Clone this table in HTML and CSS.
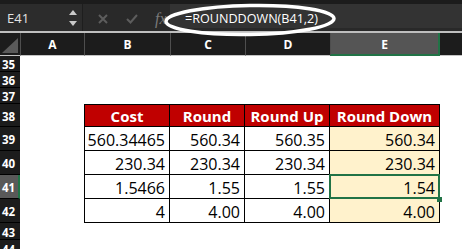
FILE: index.html
```html
<!DOCTYPE html>
<html lang="en">
<head>
<meta charset="utf-8">
<title>ROUNDDOWN</title>
<link rel="stylesheet" href="styles.css">
</head>
<body>
<div class="app">
  <div class="topstrip"></div>
  <div class="fbar">
    <div class="namebox">
      <span class="ref">E41</span>
      <svg class="stepper" width="8" height="17" viewBox="0 0 8 17">
        <path d="M4 0 L8 5 L0 5 Z" fill="#c9c9c9"/>
        <path d="M0 11 L8 11 L4 16 Z" fill="#c9c9c9"/>
      </svg>
    </div>
    <div class="tools">
      <svg class="ico-x" width="10" height="10" viewBox="0 0 10 10">
        <path d="M1 1 L9 9 M9 1 L1 9" stroke="#5d5d5d" stroke-width="2" fill="none"/>
      </svg>
      <svg class="ico-ok" width="12" height="10" viewBox="0 0 12 10">
        <path d="M1 5 L4.5 8.5 L11 1" stroke="#5d5d5d" stroke-width="2" fill="none"/>
      </svg>
      <span class="fx">fx</span>
    </div>
    <div class="formula">=ROUNDDOWN(B41,2)</div>
    <svg class="ring" width="184" height="38" viewBox="0 0 184 38">
      <ellipse cx="91" cy="20" rx="84" ry="14.5" fill="none" stroke="#fff" stroke-width="3.5" transform="rotate(-1 91 20)"/>
    </svg>
  </div>
  <div class="rule"></div>
  <div class="sheet">
    <div class="corner"><svg width="16" height="15" viewBox="0 0 16 15"><path d="M16 0 L16 15 L0 15 Z" fill="#5a5a5a"/></svg></div>
    <div class="ch">A</div>
    <div class="ch">B</div>
    <div class="ch">C</div>
    <div class="ch">D</div>
    <div class="ch ch-sel">E</div>
    <div class="ch ch-end"></div>

    <div class="rh">35</div><div class="blank"></div>
    <div class="rh">36</div><div class="blank"></div>
    <div class="rh">37</div><div class="blank"></div>

    <div class="rh">38</div>
    <div class="cell"></div>
    <div class="th first">Cost</div>
    <div class="th">Round</div>
    <div class="th">Round Up</div>
    <div class="th">Round Down</div>
    <div class="cell"></div>

    <div class="rh">39</div>
    <div class="cell"></div>
    <div class="td first">560.34465</div>
    <div class="td">560.34</div>
    <div class="td">560.35</div>
    <div class="td hl">560.34</div>
    <div class="cell"></div>

    <div class="rh">40</div>
    <div class="cell"></div>
    <div class="td first">230.34</div>
    <div class="td">230.34</div>
    <div class="td">230.34</div>
    <div class="td hl">230.34</div>
    <div class="cell"></div>

    <div class="rh rh-sel">41</div>
    <div class="cell"></div>
    <div class="td first">1.5466</div>
    <div class="td">1.55</div>
    <div class="td">1.55</div>
    <div class="td hl sel">1.54<span class="handle"></span></div>
    <div class="cell"></div>

    <div class="rh">42</div>
    <div class="cell"></div>
    <div class="td first">4</div>
    <div class="td">4.00</div>
    <div class="td">4.00</div>
    <div class="td hl">4.00</div>
    <div class="cell"></div>

    <div class="rh">43</div><div class="blank"></div>
    <div class="rh">44</div><div class="blank"></div>
  </div>
</div>
</body>
</html>
```

FILE: styles.css
```css
* { box-sizing: border-box; margin: 0; padding: 0; }
html, body { width: 462px; height: 249px; overflow: hidden; background: #fff; }
body { font-family: "Open Sans", "Liberation Sans", sans-serif; }

.app { width: 462px; }

.topstrip { height: 4px; background: #1c1c1c; }

.fbar {
  position: relative;
  height: 27px;
  display: flex;
  background: #292929;
}
.namebox {
  width: 83px;
  display: flex;
  align-items: center;
  justify-content: space-between;
  padding: 1px 5px 0 7px;
  background: #2c2c2c;
  border-right: 1px solid #1e1e1e;
}
.ref { color: #e2e2e2; font-size: 13px; }
.stepper { display: block; margin-top: 1px; }

.tools {
  width: 87px;
  display: flex;
  align-items: center;
  padding: 3px 0 0 15px;
}
.ico-x { display: block; }
.ico-ok { display: block; margin-left: 18px; }
.fx {
  margin-left: 17px;
  font-family: "Liberation Serif", serif;
  font-style: italic;
  font-size: 16px;
  color: #7a7a7a;
  line-height: 1;
}

.formula {
  flex: 1;
  height: 24px;
  background: #333;
  color: #fff;
  font-size: 12.6px;
  line-height: 24px;
  padding: 3px 0 0 15px;
  white-space: nowrap;
}

.ring { position: absolute; left: 159px; top: -4px; }

.rule { height: 2px; background: #bfbfbf; }

.sheet {
  display: grid;
  grid-template-columns: 20px 64px 86px 75px 85px 110px 1fr;
  grid-template-rows: 23px 16px 16px 16px 23px 24px 24px 24px 24px 17px 17px;
}

.corner {
  background: #1c1c1c;
  border-bottom: 1px solid #c4c4c4;
  display: flex;
  align-items: flex-end;
  justify-content: flex-end;
  padding: 0 2px 2px 0;
}
.corner svg { display: block; }

.ch {
  background: #1c1c1c;
  color: #fff;
  font-weight: 700;
  font-size: 12px;
  display: flex;
  align-items: center;
  justify-content: center;
  border-left: 1px solid #4e4e4e;
  border-bottom: 1px solid #c4c4c4;
  padding-top: 1px;
}
.ch-sel {
  background: #555;
  border-bottom: 2px solid #217346;
  border-right: 2px solid #217346;
}
.ch-end { border-left: none; }

.rh {
  background: #1c1c1c;
  color: #fff;
  font-weight: 700;
  font-size: 11.5px;
  padding-left: 2px;
  display: flex;
  align-items: center;
  border-bottom: 1px solid #000;
  padding-top: 2px;
}
.rh-sel { background: #595959; border-right: 2px solid #217346; }

.blank { grid-column: 2 / -1; }

.th, .td {
  border-right: 1px solid #000;
  border-bottom: 1px solid #000;
  color: #000;
  white-space: nowrap;
}
.first { border-left: 1px solid #000; }

.th {
  background: #c00000;
  color: #fff;
  font-weight: 700;
  font-size: 15px;
  text-align: center;
  border-top: 1px solid #000;
  line-height: 21px;
  padding-top: 1px;
}

.td {
  font-size: 16px;
  text-align: right;
  padding: 2px 4px 0 0;
  line-height: 23px;
}
.hl { background: #fff2cc; }

.sel { position: relative; }
.sel::after {
  content: "";
  position: absolute;
  top: -1px;
  left: -1px;
  right: -1px;
  bottom: -1px;
  border: 2px solid #217346;
}
.handle {
  position: absolute;
  right: -3px;
  bottom: -4px;
  width: 5px;
  height: 5px;
  background: #217346;
  z-index: 1;
}
```
